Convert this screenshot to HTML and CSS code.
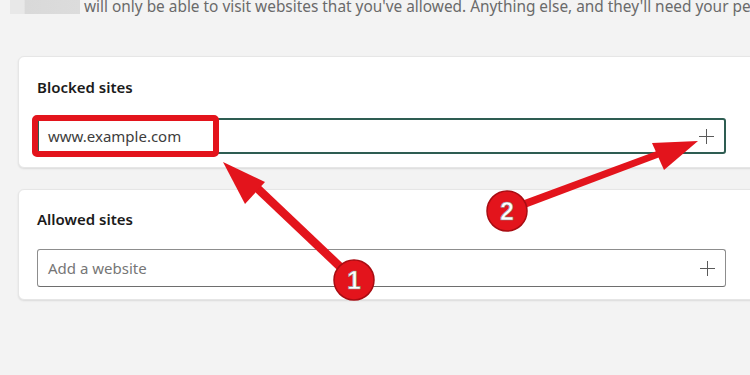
FILE: index.html
```html
<!DOCTYPE html>
<html lang="en">
<head>
    <meta charset="UTF-8">
    <title>Content filters</title>
    <link rel="stylesheet" href="styles.css">
</head>
<body>
<div class="page">
    <div class="intro">
        <span class="blur"></span>
        <span class="intro-text">will only be able to visit websites that you've allowed. Anything else, and they'll need your permission to open.</span>
    </div>

    <div class="card card-blocked">
        <h3>Blocked sites</h3>
        <div class="field focused">
            <span class="value">www.example.com</span>
            <span class="plus"></span>
        </div>
    </div>

    <div class="card card-allowed">
        <h3>Allowed sites</h3>
        <div class="field">
            <span class="placeholder">Add a website</span>
            <span class="plus"></span>
        </div>
    </div>

    <!-- annotations drawn over the screenshot -->
    <div class="mark-box"></div>
    <svg class="marks" width="750" height="375" viewBox="0 0 750 375">
        <g fill="#e3141c">
            <polygon points="351,283 357,277 259,184 253,190"/>
            <polygon points="223,162 245,204 265,182"/>
            <polygon points="505,207 509,214 668,154 665,148"/>
            <polygon points="698,141 652,143 664,170"/>
        </g>
        <g>
            <circle cx="354" cy="280" r="20" fill="#e3141c" stroke="#a80c12" stroke-width="1.5"/>
            <text x="354" y="289" class="num">1</text>
            <circle cx="507" cy="211" r="20" fill="#e3141c" stroke="#a80c12" stroke-width="1.5"/>
            <text x="507" y="220" class="num">2</text>
        </g>
    </svg>
</div>
</body>
</html>
```

FILE: styles.css
```css
* { box-sizing: border-box; }
body {
    margin: 0;
    font-family: "Noto Sans", "Open Sans", sans-serif;
    background: #f3f3f3;
    color: #1b1b1b;
    overflow: hidden;
}
.page {
    position: relative;
    width: 750px;
    height: 375px;
    overflow: hidden;
}
.intro {
    display: flex;
    align-items: flex-start;
    height: 14px;
    white-space: nowrap;
}
.blur {
    flex: none;
    width: 70px;
    height: 14px;
    margin-left: 10px;
    background: linear-gradient(90deg, #e8e8e8 0, #e8e8e8 20%, #d9d9d9 22%, #dcdcdc 100%);
}
.intro-text {
    margin-left: 4px;
    font-size: 15.4px;
    line-height: 13px;
    color: #6a6a6a;
}
.card {
    margin-left: 18px;
    margin-right: -10px;
    background: #fff;
    border: 1px solid #e6e6e6;
    border-radius: 6px;
    box-shadow: 0 1px 2px rgba(0,0,0,0.10);
    padding: 0 33px 0 18px;
}
.card h3 {
    margin: 0;
    font-size: 15px;
    font-weight: 600;
    line-height: 22px;
}
.card-blocked {
    margin-top: 42px;
    height: 112px;
    padding-top: 19px;
}
.card-blocked h3 { margin-bottom: 20px; }
.card-allowed {
    margin-top: 21px;
    height: 111px;
    padding-top: 18px;
}
.card-allowed h3 { margin-bottom: 19px; }
.field {
    display: flex;
    align-items: center;
    justify-content: space-between;
    height: 38px;
    padding: 0 10px 0 10px;
    border: 1px solid #8d8d8d;
    border-bottom-color: #6e6e6e;
    border-radius: 3px;
    font-size: 15px;
}
.field.focused {
    height: 36px;
    border: 2px solid #2e5d52;
    padding-left: 9px;
}
.value { color: #3d3d3d; }
.placeholder { color: #767676; }
.plus {
    position: relative;
    width: 15px;
    height: 15px;
}
.plus::before, .plus::after {
    content: "";
    position: absolute;
    background: #5a5a5a;
}
.plus::before { left: 7px; top: 0; width: 1px; height: 15px; }
.plus::after { top: 7px; left: 0; width: 15px; height: 1px; }
.mark-box {
    position: absolute;
    left: 32px;
    top: 115px;
    width: 187px;
    height: 42px;
    border: 6px solid #e3141c;
    border-radius: 5px;
}
.marks {
    position: absolute;
    left: 0;
    top: 0;
}
.num {
    font-family: "Liberation Sans", Arial, sans-serif;
    font-weight: bold;
    font-size: 25px;
    fill: #fff;
    stroke: #8a8a8a;
    stroke-width: 0.6px;
    text-anchor: middle;
}
```
